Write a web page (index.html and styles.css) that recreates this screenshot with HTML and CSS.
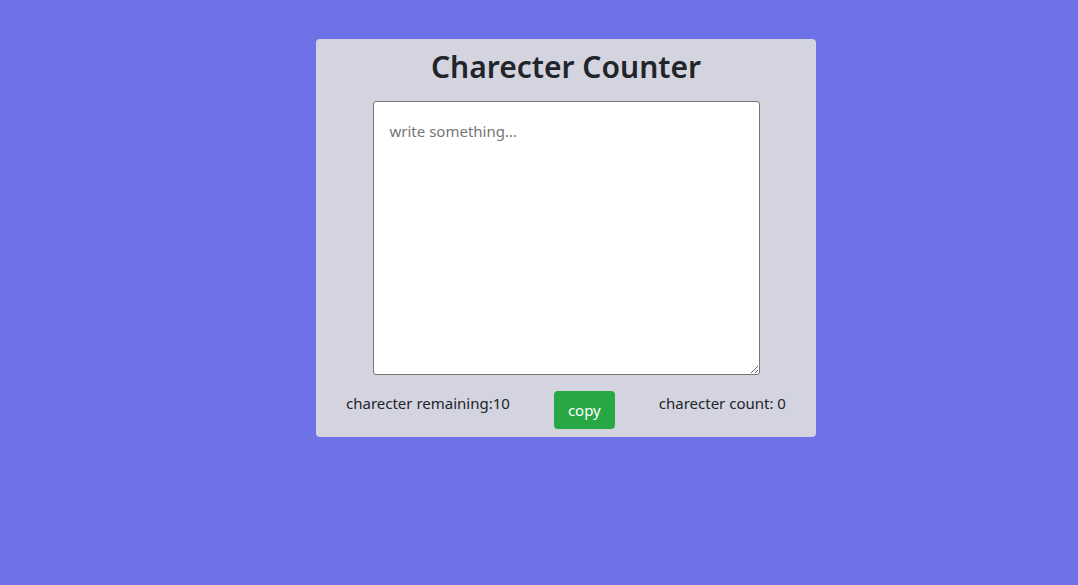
FILE: index.html
```html
<!DOCTYPE html>
<html>
<head>
<meta charset="utf-8">
<link rel="stylesheet" href="styles.css">
</head>
<body>
<main class="card">
  <h1 class="title">Charecter Counter</h1>
  <textarea class="input" placeholder="write something..."></textarea>
  <div class="footer">
    <span class="stat">charecter remaining:10</span>
    <button class="copy">copy</button>
    <span class="stat">charecter count: 0</span>
  </div>
</main>
</body>
</html>
```
FILE: styles.css
```css
html, body {
  margin: 0;
  padding: 0;
}
body {
  background: #6f71e6;
  height: 585px;
  font-family: "Noto Sans", "Open Sans", sans-serif;
  color: #212529;
  font-size: 15px;
  line-height: 24px;
}
.card {
  box-sizing: border-box;
  width: 500px;
  margin: 39px 0 0 316px;
  background: #d4d4e0;
  border-radius: 4px;
  padding: 8px 8px 8px;
  display: flex;
  flex-direction: column;
  align-items: center;
}
.title {
  margin: 0 0 14px;
  font-size: 30px;
  line-height: 40px;
  font-weight: 600;
  color: #212529;
}
.input {
  box-sizing: border-box;
  width: 387px;
  height: 274px;
  border: 1px solid #767676;
  border-radius: 3px;
  padding: 17px 16px 16px;
  font-family: inherit;
  font-size: 15px;
  line-height: 24px;
  resize: both;
  background: #fff;
}
.input::placeholder {
  color: #757575;
}
.footer {
  align-self: stretch;
  display: flex;
  justify-content: space-around;
  align-items: flex-start;
  margin-top: 16px;
}
.copy {
  background: #28a745;
  color: #fff;
  border: none;
  border-radius: 4px;
  padding: 7px 14px;
  font-family: inherit;
  font-size: 15px;
  line-height: 24px;
}
```
